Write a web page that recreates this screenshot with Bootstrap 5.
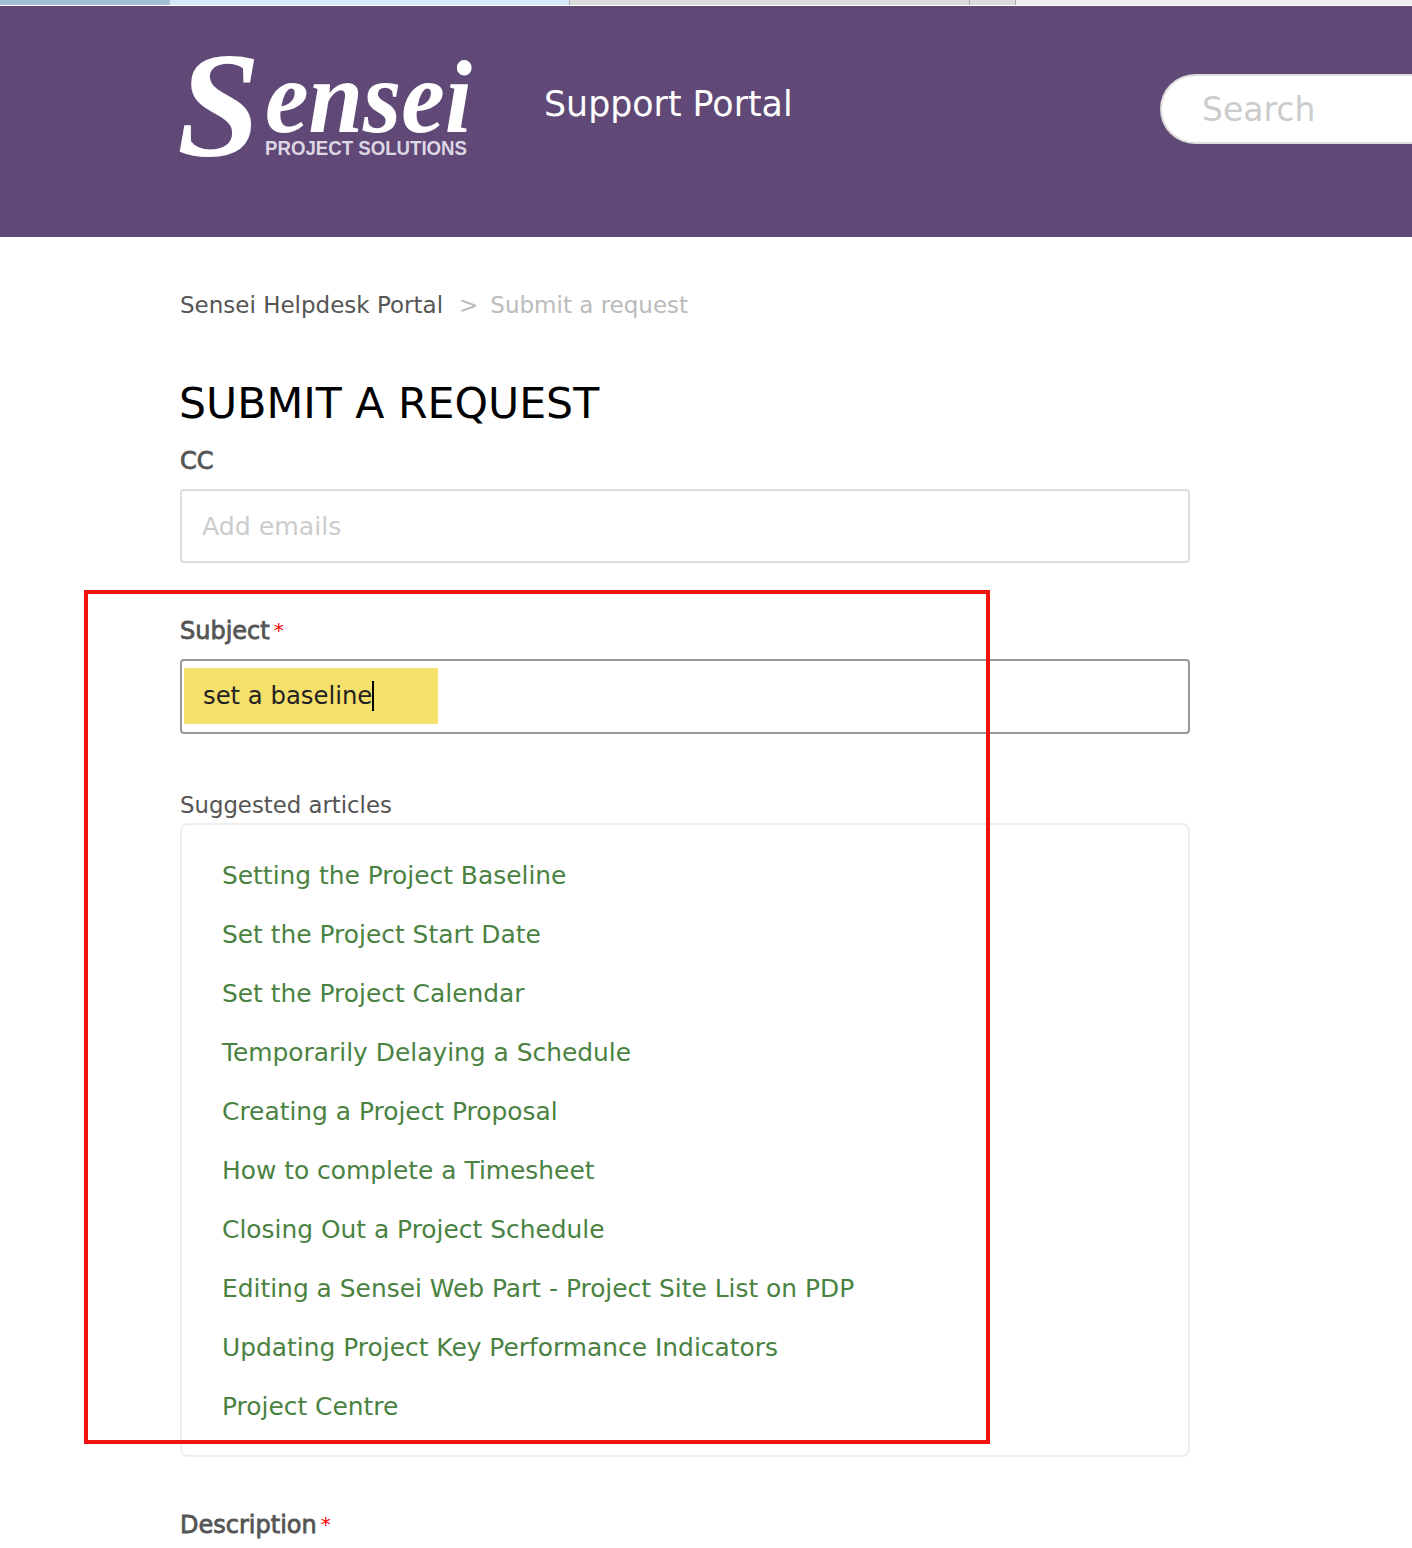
<!DOCTYPE html>
<html lang="en">
<head>
    <meta charset="UTF-8">
    <meta name="viewport" content="width=device-width, initial-scale=1.0">
    <title>Submit a request</title>
    <link href="https://cdn.jsdelivr.net/npm/bootstrap@5.3.0/dist/css/bootstrap.min.css" rel="stylesheet">
    <style>
        body {
            background-color: #fff;
            font-family: "DejaVu Sans", sans-serif;
            color: #555;
            position: relative;
            height: 1548px;
            overflow: hidden;
        }
        /* strip of browser tabs left at the top of the capture */
        .tab-strip {
            height: 6px;
            background: #eee;
            border-bottom: 1px solid #fff;
        }
        .tab-a { width: 170px; background: #a2bfd8; }
        .tab-b { width: 399px; background: #d5e8f9; }
        .tab-c { width: 400px; background: #dcdcdc; border-left: 1px solid #aaa; }
        .tab-d { width: 47px; background: #dcdcdc; border-left: 1px solid #aaa; border-right: 1px solid #aaa; }

        .site-head {
            height: 231px;
            background: #604977;
            padding-left: 180px;
            padding-top: 52px;
        }
        .logo-svg {
            display: block;
            flex-shrink: 0;
            overflow: visible;
        }
        .logo-word {
            font-family: "Liberation Serif", serif;
            font-style: italic;
            font-weight: 700;
            fill: #fff;
        }
        .logo-sub {
            font-family: "Liberation Sans", sans-serif;
            font-weight: 700;
            font-size: 20px;
            fill: #ddd6e4;
        }
        .portal-name {
            color: #fff;
            font-size: 34.8px;
            line-height: 40px;
            margin-left: 72px;
            margin-top: 26px;
            white-space: nowrap;
        }
        .search-pill {
            width: 252px;
            height: 70px;
            margin-left: auto;
            margin-top: 16px;
            background: #fff;
            border: 2px solid #ddd;
            border-right: 0;
            border-radius: 35px 0 0 35px;
            padding-left: 40px;
            font-size: 33px;
            line-height: 68px;
            color: #ccc;
            flex-shrink: 0;
        }
        .page-body {
            width: 1010px;
            margin-left: 180px;
        }
        .crumbs {
            margin-top: 53px;
            font-size: 23px;
            line-height: 30px;
            color: #555;
        }
        .crumbs .sep { color: #bbb; margin: 0 12px 0 16px; }
        .crumbs .here { color: #bbb; }
        h1.page-title {
            margin: 54px 0 0 -1px;
            font-size: 42.6px;
            line-height: 58px;
            font-weight: 400;
            color: #000;
            font-family: "DejaVu Sans", sans-serif;
        }
        .field-label {
            font-size: 24px;
            line-height: 30px;
            font-weight: 400;
            -webkit-text-stroke: 0.8px #555;
            color: #555;
            margin: 0;
        }
        .field-label i {
            color: #f00;
            -webkit-text-stroke: 0;
            font-style: normal;
            font-size: 20px;
            vertical-align: 2px;
            margin-left: 4px;
        }
        .entry-box {
            height: 74px;
            border: 2px solid #ddd;
            border-radius: 4px;
            font-size: 25.2px;
            color: #ccc;
            padding-left: 20px;
            line-height: 72px;
        }
        .entry-box.active {
            height: 75px;
            border-color: #999;
            padding: 7px 0 0 2px;
            color: #222;
            font-size: 24.3px;
        }
        .typed {
            display: block;
            width: 254px;
            height: 56px;
            background: #f5e06b;
            padding-left: 19px;
            line-height: 56px;
            white-space: nowrap;
        }
        .caret-bar {
            display: inline-block;
            width: 2px;
            height: 30px;
            background: #000;
            vertical-align: -7px;
        }
        .suggest-head {
            font-size: 22.8px;
            line-height: 30px;
            margin: 56px 0 3px;
        }
        .suggest-box {
            height: 634px;
            border: 2px solid #eee;
            border-radius: 8px;
            padding: 21px 0 0 40px;
        }
        .suggest-box a {
            display: block;
            height: 59px;
            line-height: 59px;
            font-size: 24.9px;
            color: #4a8242;
            text-decoration: none;
            white-space: nowrap;
        }
        .gap-subject { margin-top: 52px; margin-bottom: 13px; }
        .gap-cc { margin-top: 14px; margin-bottom: 13px; }
        .gap-desc { margin-top: 52px; }
        .red-frame {
            position: absolute;
            left: 84px;
            top: 590px;
            width: 906px;
            height: 854px;
            border: 4px solid #f21111;
            pointer-events: none;
        }
    </style>
</head>
<body>

<div class="tab-strip d-flex">
    <div class="tab-a"></div>
    <div class="tab-b"></div>
    <div class="tab-c"></div>
    <div class="tab-d"></div>
</div>

<header class="site-head d-flex align-items-start">
    <svg class="logo-svg" width="292" height="102" viewBox="0 0 292 102" role="img" aria-label="Sensei Project Solutions">
        <text class="logo-word" x="-3" y="98" font-size="150">S</text>
        <text class="logo-word" x="85" y="74" font-size="104" textLength="207" lengthAdjust="spacingAndGlyphs">ensei</text>
        <text class="logo-sub" x="85" y="97" textLength="202" lengthAdjust="spacingAndGlyphs">PROJECT SOLUTIONS</text>
    </svg>
    <div class="portal-name">Support Portal</div>
    <div class="search-pill">Search</div>
</header>

<main class="page-body">
    <div class="crumbs">Sensei Helpdesk Portal<span class="sep">&gt;</span><span class="here">Submit a request</span></div>
    <h1 class="page-title">SUBMIT A REQUEST</h1>

    <p class="field-label gap-cc">CC</p>
    <div class="entry-box">Add emails</div>

    <p class="field-label gap-subject">Subject<i>*</i></p>
    <div class="entry-box active"><span class="typed">set a baseline<span class="caret-bar"></span></span></div>

    <p class="suggest-head">Suggested articles</p>
    <div class="suggest-box">
        <a href="#">Setting the Project Baseline</a>
        <a href="#">Set the Project Start Date</a>
        <a href="#">Set the Project Calendar</a>
        <a href="#">Temporarily Delaying a Schedule</a>
        <a href="#">Creating a Project Proposal</a>
        <a href="#">How to complete a Timesheet</a>
        <a href="#">Closing Out a Project Schedule</a>
        <a href="#">Editing a Sensei Web Part - Project Site List on PDP</a>
        <a href="#">Updating Project Key Performance Indicators</a>
        <a href="#">Project Centre</a>
    </div>

    <p class="field-label gap-desc">Description<i>*</i></p>
</main>

<div class="red-frame"></div>

<script src="https://cdn.jsdelivr.net/npm/bootstrap@5.3.0/dist/js/bootstrap.bundle.min.js"></script>
</body>
</html>
